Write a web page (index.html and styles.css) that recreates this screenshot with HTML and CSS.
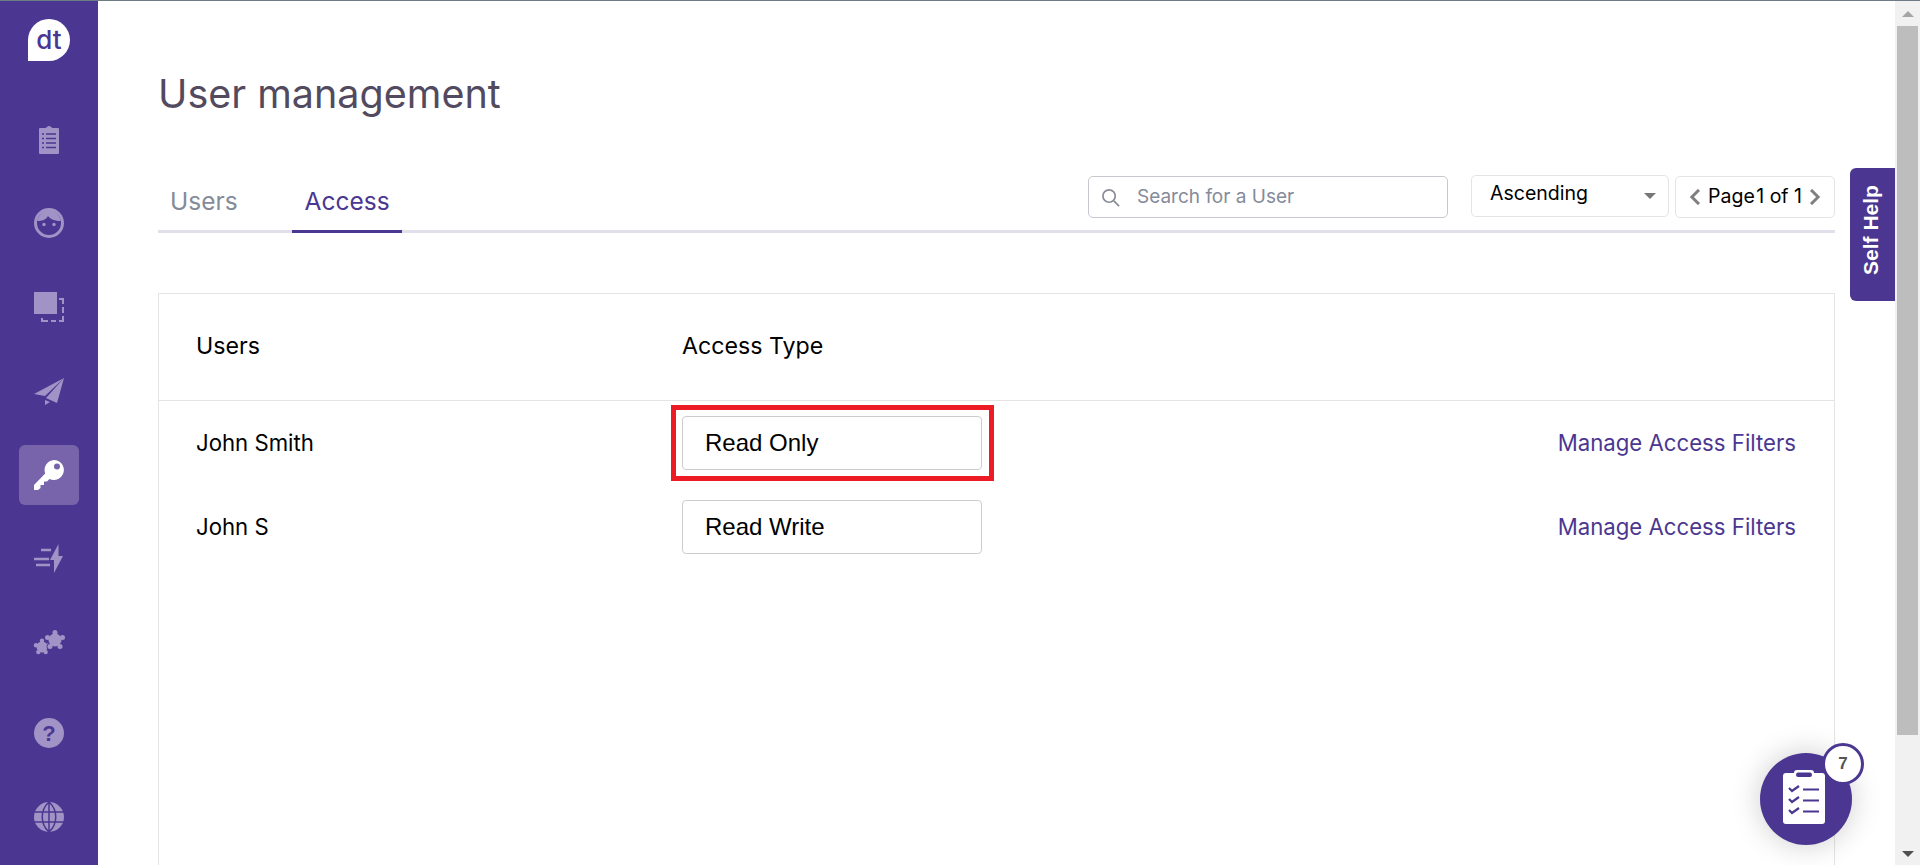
FILE: index.html
```html
<!DOCTYPE html>
<html lang="en">

<head>
    <meta charset="UTF-8">
    <meta name="viewport" content="width=device-width, initial-scale=1.0">
    <title>User management</title>
    <link rel="stylesheet" href="styles.css">
</head>

<body>
    <aside class="sidebar">
        <div class="logo">dt</div>
        <nav class="side-nav">
            <a class="side-item">
                <svg viewBox="0 0 20 29" width="20" height="29"><path d="M1 3h5.500l1.500-1a2.500 2.500 0 0 1 4 0l1.500 1H19a1 1 0 0 1 1 1v24a1 1 0 0 1-1 1H1a1 1 0 0 1-1-1V4a1 1 0 0 1 1-1z" fill="#a193c6"/><path d="M3 9h2M7 9h10M3 13.500h2M7 13.500h10M3 18h2M7 18h10M3 22.500h2M7 22.500h10" stroke="#4b3791" stroke-width="1.400"/></svg>
            </a>
            <a class="side-item">
                <svg viewBox="0 0 30 30" width="30" height="30"><circle cx="15" cy="15" r="13.500" fill="none" stroke="#a193c6" stroke-width="3"/><path d="M3 13c5 0 9-1 11-5 2 3 7 5 13 5C25 6 20 2 15 2S5 6 3 13z" fill="#a193c6"/><circle cx="10" cy="16.500" r="1.700" fill="#a193c6"/><circle cx="20" cy="16.500" r="1.700" fill="#a193c6"/></svg>
            </a>
            <a class="side-item">
                <svg viewBox="0 0 30 30" width="30" height="30"><rect x="0" y="0" width="23" height="22" fill="#a193c6"/><path d="M25 7h4v5M29 15v6M29 24v5h-4M22 29h-5M14 29H8v-3" fill="none" stroke="#a193c6" stroke-width="2"/></svg>
            </a>
            <a class="side-item">
                <svg viewBox="0 0 30 27" width="30" height="27"><path d="M0 16 30 0 11 18zM12 20 30 0 23 25zM11 22l5 2-5 3z" fill="#a193c6"/></svg>
            </a>
            <a class="side-item active">
                <svg viewBox="0 0 30 30" width="30" height="30"><path fill-rule="evenodd" d="M20 0a10 10 0 1 1-4.500 19L13 21.500h-3V25H6.500v3L4 30H0v-5L11.200 13.500A10 10 0 0 1 20 0zm3 3.500a3 3 0 1 0 0 6 3 3 0 0 0 0-6z" fill="#fff"/></svg>
            </a>
            <a class="side-item">
                <svg viewBox="0 0 30 30" width="30" height="30"><path d="M24.500 0v12H29l-9 17V16h-4z" fill="#a193c6"/><path d="M7 6h10M0 15h15M2 21h14" stroke="#a193c6" stroke-width="2.500"/></svg>
            </a>
            <a class="side-item">
                <svg viewBox="0 0 32 26" width="32" height="26">
                    <g fill="#a193c6"><circle cx="9" cy="17" r="5.500"/><circle cx="9" cy="10.700" r="2.200"/><circle cx="15" cy="15.200" r="2.200"/><circle cx="12.700" cy="22.100" r="2.200"/><circle cx="5.300" cy="22.100" r="2.200"/><circle cx="3" cy="15.200" r="2.200"/></g>
                    <circle cx="17" cy="16.500" r="3.400" fill="#4b3791"/>
                    <g fill="#a193c6"><circle cx="22" cy="10" r="6.500"/><circle cx="22" cy="2.500" r="2.500"/><circle cx="29.500" cy="7.500" r="2.500"/><circle cx="27" cy="16.500" r="2.500"/><circle cx="17" cy="16.500" r="2.500"/><circle cx="14.500" cy="7.500" r="2.500"/></g>
                </svg>
            </a>
            <a class="side-item help-item">
                <svg viewBox="0 0 30 30" width="30" height="30"><circle cx="15" cy="15" r="15" fill="#a193c6"/><text x="15" y="22.500" text-anchor="middle" class="help-mark">?</text></svg>
            </a>
            <a class="side-item">
                <svg viewBox="0 0 30 30" width="30" height="30"><circle cx="15" cy="15" r="15" fill="#a193c6"/><path d="M0 10h30M0 20h30M15 0v30M15 0c-9 8-9 22 0 30M15 0c9 8 9 22 0 30" fill="none" stroke="#4b3791" stroke-width="1.500"/></svg>
            </a>
        </nav>
    </aside>

    <main class="content">
        <h1 class="page-title">User management</h1>

        <div class="tabs-row">
            <div class="tabs">
                <a class="tab">Users</a>
                <a class="tab active">Access</a>
            </div>
            <div class="tools">
                <div class="search">
                    <svg viewBox="0 0 20 20" width="19" height="19"><circle cx="8.500" cy="8.500" r="6.500" fill="none" stroke="#8a8d98" stroke-width="1.800"/><path d="M13.500 13.500 19 19" stroke="#8a8d98" stroke-width="1.800"/></svg>
                    <span class="search-text">Search for a User</span>
                </div>
                <div class="sort"><span class="sort-label">Ascending</span><i class="caret"></i></div>
                <div class="pager">
                    <svg viewBox="0 0 11 16" width="11" height="16"><path d="M10 .900 2.900 8l7.100 7.100" fill="none" stroke="#808080" stroke-width="3"/></svg>
                    <span class="page-text"><span class="page-word">Page </span>1 of 1</span>
                    <svg viewBox="0 0 11 16" width="11" height="16"><path d="M1 .900 8.100 8 1 15.100" fill="none" stroke="#808080" stroke-width="3"/></svg>
                </div>
            </div>
        </div>

        <section class="access-table">
            <div class="table-head">
                <div class="col-user">Users</div>
                <div class="col-type">Access Type</div>
            </div>
            <div class="table-row">
                <div class="col-user">John Smith</div>
                <div class="col-type"><div class="type-select marked">Read Only</div></div>
                <a class="filters-link">Manage Access Filters</a>
            </div>
            <div class="table-row">
                <div class="col-user">John S</div>
                <div class="col-type"><div class="type-select">Read Write</div></div>
                <a class="filters-link">Manage Access Filters</a>
            </div>
        </section>
    </main>

    <a class="self-help"><span>Self Help</span></a>

    <a class="checklist">
        <svg class="checklist-icon" viewBox="0 0 42 54" width="42" height="54"><path d="M3 3h8a3 3 0 0 1 3-3h14a3 3 0 0 1 3 3h8a3 3 0 0 1 3 3v45a3 3 0 0 1-3 3H3a3 3 0 0 1-3-3V6a3 3 0 0 1 3-3z" fill="#fff"/><rect x="13" y="2.500" width="16" height="4.500" rx="2.200" fill="#4b3791"/><path d="M6 18l3 3 7-5M6 29l3 3 7-5M6 40l3 3 7-5" fill="none" stroke="#4b3791" stroke-width="2.200"/><path d="M20 19.500h16M20 30.500h16M20 41.500h16" stroke="#4b3791" stroke-width="2.200"/></svg>
        <span class="badge">7</span>
    </a>

    <div class="scrollbar">
        <i class="arrow-up"></i>
        <div class="thumb"></div>
        <i class="arrow-down"></i>
    </div>
</body>

</html>
```

FILE: styles.css
```css
* {
    box-sizing: border-box;
}

html,
body {
    height: 100%;
}

body {
    margin: 0;
    display: flex;
    overflow: hidden;
    background-color: #fff;
    border-top: 1px solid #6d7c84;
    font-family: Inter, sans-serif;
    color: #000;
}

.sidebar {
    flex: none;
    width: 98px;
    padding-top: 18px;
    display: flex;
    flex-direction: column;
    align-items: center;
    background-color: #4b3791;
}

.logo {
    width: 42px;
    height: 42px;
    border-radius: 50% 50% 50% 0;
    background-color: #fff;
    color: #4b3791;
    font-size: 26px;
    font-weight: 500;
    line-height: 42px;
    text-align: center;
}

.side-nav {
    margin-top: 48px;
    display: flex;
    flex-direction: column;
    align-items: center;
    gap: 24px;
}

.side-item {
    width: 60px;
    height: 60px;
    display: flex;
    align-items: center;
    justify-content: center;
    border-radius: 6px;
}

.side-item.active {
    background-color: #7764ab;
}

.help-item {
    margin-top: 6px;
}

.help-mark {
    font-family: "Liberation Sans", sans-serif;
    font-size: 22px;
    font-weight: 700;
    fill: #4b3791;
}

.content {
    flex: 1;
    min-width: 0;
    padding: 0 60px;
    display: flex;
    flex-direction: column;
}

.page-title {
    margin: 0;
    padding-top: 69px;
    font-size: 39.500px;
    line-height: 48px;
    font-weight: 400;
    color: #524a5e;
}

.tabs-row {
    margin-top: 57px;
    height: 58px;
    flex: none;
    display: flex;
    align-items: flex-start;
    justify-content: space-between;
    border-bottom: 3px solid #e0e0ea;
}

.tabs {
    display: flex;
    gap: 42px;
}

.tab {
    height: 58px;
    padding: 0 12px;
    font-size: 24.500px;
    line-height: 52px;
    color: #858b99;
}

.tab.active {
    padding-left: 13px;
    color: #4b3791;
    border-bottom: 3px solid #4b3791;
}

.tools {
    display: flex;
    align-items: center;
    gap: 6px;
}

.search {
    width: 360px;
    height: 42px;
    margin-right: 17px;
    padding-left: 12px;
    display: flex;
    align-items: center;
    gap: 17px;
    border: 1px solid #c8c8d0;
    border-radius: 5px;
    font-size: 19px;
    color: #858b99;
}

.search-text {
    margin-bottom: 2px;
}

.sort {
    width: 198px;
    height: 42px;
    margin-bottom: 2px;
    padding: 0 12px 0 18px;
    display: flex;
    align-items: center;
    justify-content: space-between;
    border: 1px solid #e4e4e4;
    border-radius: 5px;
    font-size: 19.500px;
}

.sort-label {
    margin-bottom: 7px;
}

.caret {
    width: 0;
    height: 0;
    border-left: 6px solid transparent;
    border-right: 6px solid transparent;
    border-top: 6px solid #777;
}

.pager {
    width: 160px;
    height: 42px;
    padding: 0 13px;
    display: flex;
    align-items: center;
    justify-content: space-between;
    border: 1px solid #e4e4e4;
    border-radius: 5px;
    font-size: 19.500px;
    white-space: nowrap;
}

.page-text {
    margin-bottom: 2px;
}

.page-word {
    word-spacing: -4px;
}

.access-table {
    flex: 1;
    margin-top: 60px;
    border: 1px solid #e4e4e4;
    border-bottom: none;
}

.table-head {
    height: 107px;
    padding: 0 38px 2px 37px;
    display: flex;
    align-items: center;
    border-bottom: 1px solid #e4e4e4;
    font-size: 23.200px;
}

.table-row {
    height: 84px;
    padding: 0 38px 0 37px;
    display: flex;
    align-items: center;
    font-size: 22.200px;
}

.table-row .col-user,
.filters-link {
    margin-bottom: 2px;
}

.col-user {
    width: 486px;
}

.col-type {
    flex: 1;
}

.type-select {
    position: relative;
    width: 300px;
    height: 54px;
    padding-left: 22px;
    border: 1px solid #ccc;
    border-radius: 4px;
    font-family: "Liberation Sans", sans-serif;
    font-size: 24px;
    line-height: 52px;
}

/* red annotation box around the first select */
.type-select.marked::after {
    content: "";
    position: absolute;
    inset: -12px -13px -12px -12px;
    border: 5px solid #ed1c24;
}

.filters-link {
    color: #4b3791;
}

.self-help {
    position: absolute;
    top: 168px;
    left: 1850px;
    width: 45px;
    height: 133px;
    padding: 0 4px 9px 0;
    display: flex;
    align-items: center;
    justify-content: center;
    border-radius: 6px 0 0 6px;
    background-color: #4b3791;
    color: #fff;
    font-family: "Liberation Sans", sans-serif;
    font-size: 21px;
    font-weight: 700;
}

.self-help span {
    transform: rotate(-90deg);
    white-space: nowrap;
}

.checklist {
    position: absolute;
    left: 1760px;
    top: 753px;
    width: 92px;
    height: 92px;
    display: flex;
    align-items: center;
    justify-content: center;
    border-radius: 50%;
    background-color: #4b3791;
    box-shadow: 0 0 30px rgba(0, 0, 0, 0.2);
}

.checklist-icon {
    margin: 0 4px 4px 0;
}

.badge {
    position: absolute;
    top: -10px;
    right: -12px;
    width: 42px;
    height: 42px;
    border: 3px solid #4b3791;
    border-radius: 50%;
    background-color: #fff;
    color: #555;
    font-family: "Liberation Sans", sans-serif;
    font-size: 17px;
    font-weight: 700;
    line-height: 36px;
    text-align: center;
}

.scrollbar {
    flex: none;
    width: 25px;
    padding: 0 2px;
    display: flex;
    flex-direction: column;
    align-items: center;
    background-color: #f1f1f1;
}

.thumb {
    width: 21px;
    height: 709px;
    margin-top: 9px;
    background-color: #bdbdbd;
}

.arrow-up,
.arrow-down {
    width: 0;
    height: 0;
    border-left: 6px solid transparent;
    border-right: 6px solid transparent;
}

.arrow-up {
    margin-top: 10px;
    border-bottom: 6px solid #a5a5a5;
}

.arrow-down {
    margin-top: auto;
    margin-bottom: 8px;
    border-top: 6px solid #505050;
}
```
